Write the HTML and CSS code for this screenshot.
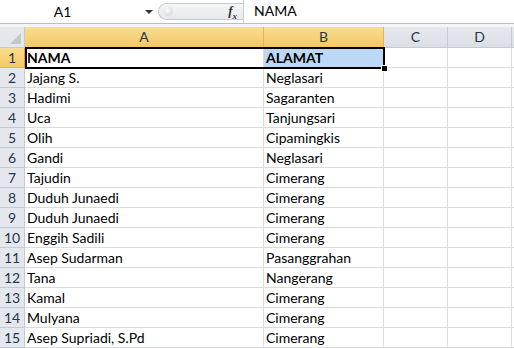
FILE: index.html
```html
<!DOCTYPE html>
<html>
<head>
    <title>Daftar Nama - Excel</title>
    <link rel="stylesheet" href="styles.css">
</head>
<body>
    <div class="formula-bar">
        <div class="name-box">
            <span class="name-text">A1</span>
            <span class="name-arrow"></span>
        </div>
        <div class="fx-panel">
            <span class="dimple"></span>
            <span class="fx">f<sub>x</sub></span>
        </div>
        <div class="formula-input">NAMA</div>
    </div>
    <div class="bar-gap"></div>

    <div class="sheet">
        <div class="corner"><span class="corner-tri"></span></div>
        <div class="col-hdr sel">A</div>
        <div class="col-hdr sel">B</div>
        <div class="col-hdr">C</div>
        <div class="col-hdr">D</div>
        <div class="col-hdr rest"></div>

        <div class="row-hdr sel">1</div>
        <div class="cell bold">NAMA</div>
        <div class="cell bold range">ALAMAT</div>
        <div class="cell"></div><div class="cell"></div><div class="cell rest"></div>

        <div class="row-hdr">2</div><div class="cell">Jajang S.</div><div class="cell">Neglasari</div><div class="cell"></div><div class="cell"></div><div class="cell rest"></div>
        <div class="row-hdr">3</div><div class="cell">Hadimi</div><div class="cell">Sagaranten</div><div class="cell"></div><div class="cell"></div><div class="cell rest"></div>
        <div class="row-hdr">4</div><div class="cell">Uca</div><div class="cell">Tanjungsari</div><div class="cell"></div><div class="cell"></div><div class="cell rest"></div>
        <div class="row-hdr">5</div><div class="cell">Olih</div><div class="cell">Cipamingkis</div><div class="cell"></div><div class="cell"></div><div class="cell rest"></div>
        <div class="row-hdr">6</div><div class="cell">Gandi</div><div class="cell">Neglasari</div><div class="cell"></div><div class="cell"></div><div class="cell rest"></div>
        <div class="row-hdr">7</div><div class="cell">Tajudin</div><div class="cell">Cimerang</div><div class="cell"></div><div class="cell"></div><div class="cell rest"></div>
        <div class="row-hdr">8</div><div class="cell">Duduh Junaedi</div><div class="cell">Cimerang</div><div class="cell"></div><div class="cell"></div><div class="cell rest"></div>
        <div class="row-hdr">9</div><div class="cell">Duduh Junaedi</div><div class="cell">Cimerang</div><div class="cell"></div><div class="cell"></div><div class="cell rest"></div>
        <div class="row-hdr">10</div><div class="cell">Enggih Sadili</div><div class="cell">Cimerang</div><div class="cell"></div><div class="cell"></div><div class="cell rest"></div>
        <div class="row-hdr">11</div><div class="cell">Asep Sudarman</div><div class="cell">Pasanggrahan</div><div class="cell"></div><div class="cell"></div><div class="cell rest"></div>
        <div class="row-hdr">12</div><div class="cell">Tana</div><div class="cell">Nangerang</div><div class="cell"></div><div class="cell"></div><div class="cell rest"></div>
        <div class="row-hdr">13</div><div class="cell">Kamal</div><div class="cell">Cimerang</div><div class="cell"></div><div class="cell"></div><div class="cell rest"></div>
        <div class="row-hdr">14</div><div class="cell">Mulyana</div><div class="cell">Cimerang</div><div class="cell"></div><div class="cell"></div><div class="cell rest"></div>
        <div class="row-hdr">15</div><div class="cell">Asep Supriadi, S.Pd</div><div class="cell">Cimerang</div><div class="cell"></div><div class="cell"></div><div class="cell rest"></div>

        <div class="selection"><span class="fill-handle"></span></div>
    </div>
</body>
</html>
```

FILE: styles.css
```css
body {
    margin: 0;
    background: #fff;
    font-family: Lato, "Liberation Sans", sans-serif;
    overflow: hidden;
}
.formula-bar {
    display: flex;
    height: 23px;
    border-bottom: 1px solid #b9bec6;
    background: #fff;
}
.name-box {
    width: 158px;
    display: flex;
    align-items: center;
    position: relative;
}
.name-text {
    flex: 1;
    text-align: center;
    font-size: 14px;
    color: #000;
    padding-right: 20px;
}
.name-arrow {
    width: 0;
    height: 0;
    border-left: 4px solid transparent;
    border-right: 4px solid transparent;
    border-top: 4px solid #333;
    margin-right: 5px;
}
.fx-panel {
    margin-top: 3px;
    height: 17px;
    width: 85px;
    box-sizing: border-box;
    border: 1px solid #c6cbd2;
    border-right: none;
    border-radius: 9px 0 0 9px;
    background: linear-gradient(#f4f5f7, #e6e9ed);
    display: flex;
    align-items: center;
    justify-content: space-between;
}
.dimple {
    width: 9px;
    height: 9px;
    margin-left: 5px;
    border-radius: 50%;
    background: radial-gradient(circle at 40% 35%, #fdfdfd, #c9ced5);
}
.fx {
    font-family: "Liberation Serif", serif;
    font-style: italic;
    font-weight: bold;
    font-size: 13px;
    color: #333;
    margin-right: 6px;
}
.fx sub {
    font-size: 9px;
}
.formula-input {
    flex: 1;
    border-left: 1px solid #c6cbd2;
    font-size: 14px;
    padding-left: 10px;
    line-height: 22px;
    color: #000;
}
.bar-gap {
    height: 3px;
    background: #f3f5f8;
}
.sheet {
    position: relative;
    display: grid;
    grid-template-columns: 25px 239px 120px 64px 64px 1fr;
    grid-template-rows: 21px repeat(15, 20px);
}
.sheet > div {
    box-sizing: border-box;
}
.corner {
    background: #e4e7ec;
    border-right: 1px solid #c5cad1;
    border-bottom: 1px solid #c5cad1;
    position: relative;
}
.corner-tri {
    position: absolute;
    right: 3px;
    bottom: 3px;
    width: 0;
    height: 0;
    border-left: 11px solid transparent;
    border-bottom: 11px solid #c3c8cf;
}
.col-hdr {
    background: linear-gradient(#e6e9ee, #dadfe5);
    border-right: 1px solid #c5cad1;
    border-bottom: 1px solid #c5cad1;
    text-align: center;
    font-size: 14px;
    line-height: 20px;
    color: #27364a;
}
.col-hdr.sel {
    background: linear-gradient(#f9dd93, #f4c862);
    border-right-color: #e3b35b;
    border-bottom: 1px solid #f29436;
}
.row-hdr {
    background: #e4e8ee;
    border-right: 1px solid #c5cad1;
    border-bottom: 1px solid #c5cad1;
    text-align: center;
    font-size: 14px;
    line-height: 20px;
    color: #27364a;
}
.row-hdr.sel {
    background: linear-gradient(#f9dd93, #f4c862);
    border-right: 1px solid #f29436;
    border-bottom-color: #e3b35b;
}
.cell {
    border-right: 1px solid #dadcdd;
    border-bottom: 1px solid #dadcdd;
    font-size: 14px;
    line-height: 20px;
    padding-left: 2px;
    color: #000;
    white-space: nowrap;
    overflow: visible;
}
.cell.bold {
    font-weight: bold;
}
.cell.range {
    background: #bbd8f6;
}
.selection {
    position: absolute;
    left: 25px;
    top: 20px;
    width: 360px;
    height: 22px;
    border: 2px solid #000;
    box-sizing: border-box;
    pointer-events: none;
}
.fill-handle {
    position: absolute;
    right: -5px;
    bottom: -5px;
    width: 5px;
    height: 5px;
    background: #000;
    border: 1px solid #fff;
}
```
